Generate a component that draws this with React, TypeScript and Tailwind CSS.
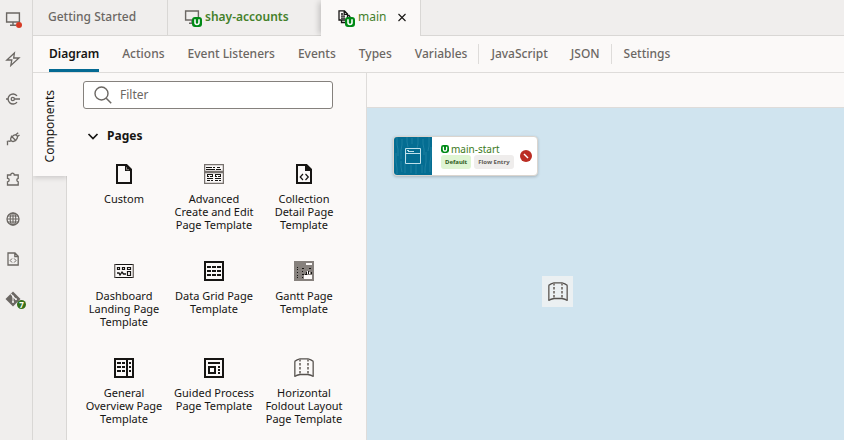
import React from "react";

type IconProps = { className?: string };

const Svg = ({ size = 20, children, className = "" }: { size?: number; children: React.ReactNode; className?: string }) => (
  <svg width={size} height={size} viewBox={`0 0 ${size} ${size}`} fill="none" stroke="currentColor" className={`shrink-0 ${className}`} aria-hidden="true">
    {children}
  </svg>
);

const ModifiedMark = ({ size = 10 }: { size?: number }) => (
  <svg width={size} height={size} viewBox="0 0 10 10" fill="none" aria-hidden="true">
    <rect width="10" height="10" rx="3" fill="#008a16" />
    <path d="M3 2.2v3.3a2 2 0 0 0 4 0V2.2" stroke="#fff" strokeWidth="1.6" />
  </svg>
);

const Monitor = () => (
  <Svg size={16}>
    <path d="M1.6 2h12.8v9H1.6zM8 11v3M5 14.2h6" strokeWidth="1.4" />
  </Svg>
);
const Bolt = () => (
  <Svg size={16}>
    <path d="M9.4 2 1.800 9h5L5.800 14.500l8.200-7.500H8.700z" strokeWidth="1.3" />
  </Svg>
);
const Endpoint = () => (
  <Svg size={16}>
    <path d="M12 4.900A5 5 0 1 0 12 11.100" strokeWidth="1.4" />
    <circle cx="7.800" cy="8" r="1.600" strokeWidth="1.300" />
    <path d="M9.300 8H15M1 8h2" strokeWidth="1.300" />
  </Svg>
);
const Plug = () => (
  <Svg size={16}>
    <path d="M6 4.800 11.200 10M7 5.500C5 7.500 5.500 9 6.300 9.700S9 10.800 10.500 9.300M7.500 5.300C9 3.500 10.800 3.500 11.800 4.400s1 2.800-.8 4.400M10.800 3.800l2.400-2M12.200 5.700l2.300-1.800M6 9.700C4.500 11 3.800 9.500 1.800 10.500M2.500 10.300v4" strokeWidth="1.300" />
  </Svg>
);
const Puzzle = () => (
  <Svg size={16}>
    <path d="M2.500 4h3.200a1.800 1.800 0 1 1 3.600 0h3.900v3.300a1.800 1.800 0 0 0 0 3.500V14H2.500v-3.200a1.700 1.700 0 0 0 0-3.400z" strokeWidth="1.300" />
  </Svg>
);
const Globe = () => (
  <Svg size={16}>
    <circle cx="8" cy="8" r="6" strokeWidth="1.300" />
    <ellipse cx="8" cy="8" rx="2.800" ry="6" strokeWidth="1.100" />
    <path d="M2 8h12M2.800 5h10.400M2.800 11h10.400M8 2v12" strokeWidth="1.100" />
  </Svg>
);
const CodeFile = () => (
  <Svg size={16}>
    <path d="M3 2h7l3.200 3.200V14H3zM9.800 2v3.500h3.400" strokeWidth="1.300" />
    <path d="M7 7.500 5.200 9.500 7 11.500M9.200 7.500 11 9.500 9.200 11.500" strokeWidth="1" />
  </Svg>
);
const Git = () => (
  <Svg size={16}>
    <path d="M8 .5 15.500 8 8 15.500.500 8z" fill="currentColor" stroke="none" />
    <path d="M5.800 3 8 5.200V11M8 5.500l3 3" stroke="#f0eeed" strokeWidth="1.100" />
    <circle cx="8" cy="11" r="1.100" fill="#f0eeed" stroke="none" />
    <circle cx="8" cy="5.500" r="1" fill="#f0eeed" stroke="none" />
    <circle cx="11" cy="8.300" r="1" fill="#f0eeed" stroke="none" />
  </Svg>
);

const PageStack = () => (
  <Svg size={16}>
    <path d="M2 1.800h5.500L10.500 5v6H2zM7.200 2v3.300h3.300M4 5h2M4 7.200h4M4 9.200h4M4.500 11v2.500h5M10.500 6.500h1.500L13 8v3" strokeWidth="1.300" />
  </Svg>
);

const PageBlank = () => (
  <Svg>
    <path d="M3 1h9.500L17 5.500V19H3z" strokeWidth="2" />
    <path d="M11 0l7 7h-7z" fill="currentColor" stroke="none" />
    <path d="M12.500 3.200v2.500H15" stroke="#8b8580" strokeWidth="1" />
  </Svg>
);
const PageCode = () => (
  <Svg>
    <path d="M3 1h9.500L17 5.500V19H3z" strokeWidth="2" />
    <path d="M11 0l7 7h-7z" fill="currentColor" stroke="none" />
    <path d="M9 10 6.200 13 9 16M11.500 10l2.800 3-2.800 3" strokeWidth="1.200" />
  </Svg>
);
const AdvancedForm = () => (
  <Svg>
    <path d="M.6.600h18.800v18.800H.6zM0 7.500h20M0 8.500h20" stroke="#77726e" strokeWidth="1.300" />
    <path d="M2 3.500h6m1 0h2m2 0h3M2 5.500h9m1 0h5" />
    <path d="M3 10.500h6m2 0h6M3 12.500h2m1 0h3m2 0h2m1 0h3M3 14.500h6m2 0h6M3 16.500h3m1 0h2m2 0h3m1 0h2M3.500 10v3M8.500 10v3M11.500 10v3M16.500 10v3" />
  </Svg>
);
const Dashboard = () => (
  <Svg>
    <path d="M0 3.500h20M0 16.500h20" strokeWidth="1.200" />
    <path d="M.7 3v14M19.300 3v14" stroke="#77726e" strokeWidth="1.400" />
    <path d="M3.500 6.500h2v2h-2zM8.500 6.500h2v2h-2zM13.500 6.500h3v2h-3zM13.500 10.500h3v4h-3z" strokeWidth="1.200" />
    <path d="M3 12h2l1 2 2-3 1.500 2H12" strokeWidth="1.300" />
  </Svg>
);
const DataGrid = () => (
  <Svg>
    <path d="M1 1h18v18H1z" strokeWidth="2" />
    <path d="M3 6h4m1 0h4m1 0h4M3 10h4m1 0h4m1 0h4M3 14h4m1 0h4m1 0h4" strokeWidth="2" />
  </Svg>
);
const Gantt = () => (
  <Svg>
    <path d="M0 0h20v20H0z" fill="#86817d" stroke="none" />
    <path d="M12 3h6M10 15h8M10 17h8" stroke="#fbf9f8" strokeWidth="2" />
    <path d="M3 6.500h1M3 8.500h1M3 11.500h1M3 14.500h1M3 16.500h1M8 7.500h2M8 10.500h1M8 13.500h2M8 16.500h1M15 7.500h2M11 13.500h2" strokeWidth="1" />
    <path d="M12.500 11v2M14.500 10v3M17.500 11v2" />
    <path d="M13.500 10v3M15.500 11v2" stroke="#fbf9f8" />
  </Svg>
);
const Overview = () => (
  <Svg>
    <path d="M1 1h18v18H1zM13 1v18" strokeWidth="2" />
    <path d="M3 5h4m1 0h3M3 9h4m1 0h3M3 13h4m1 0h3M15 5h2M15 9h2M15 13h2" strokeWidth="2" />
  </Svg>
);
const Guided = () => (
  <Svg>
    <path d="M1 1h18v18H1zM4 5h12M5 9h6v6H5z" strokeWidth="2" />
    <path d="M14 9h2M14 12h2M14 15h2" strokeWidth="2" />
  </Svg>
);
const Foldout = () => (
  <Svg>
    <path d="M.8 3.500v15M19.200 3.500v15" stroke="#77736f" strokeWidth="1.600" />
    <path d="M.5 3.500Q3 1.500 6 .8h8q3 .7 5.500 2.700M.5 18.500Q3 17 6 16.500h8q3 .5 5.500 2" stroke="#55514e" strokeWidth="1.300" />
    <path d="M6 1v15.500M14 1v15.500" stroke="#86817d" strokeWidth="2" strokeDasharray="2.500 1.500" />
  </Svg>
);

const WindowIcon = ({ className = "" }: IconProps) => (
  <svg width="16" height="16" viewBox="0 0 16 16" fill="none" stroke="#bfe0ea" className={className} aria-hidden="true">
    <path d="M.5.500h15v15H.5zM0 5.500h16" />
    <path d="M2 2.500h2M3 3.500h6" />
  </svg>
);

const rail: { label: string; icon: React.ReactNode; badge?: React.ReactNode }[] = [
  { label: "Applications", icon: <Monitor />, badge: <span className="absolute -right-px bottom-[3px] size-[6px] rounded-full bg-[#d63b25]" /> },
  { label: "Services", icon: <Bolt /> },
  { label: "Endpoints", icon: <Endpoint /> },
  { label: "Processes", icon: <Plug /> },
  { label: "Extensions", icon: <Puzzle /> },
  { label: "Languages", icon: <Globe /> },
  { label: "Source", icon: <CodeFile /> },
  {
    label: "Git",
    icon: <Git />,
    badge: <span className="absolute -right-[5px] bottom-[2px] flex size-[9px] items-center justify-center rounded-full bg-[#35701c] text-[8px] leading-none font-bold text-white">7</span>,
  },
];

const templates: { name: string; icon: React.ReactNode }[] = [
  { name: "Custom", icon: <PageBlank /> },
  { name: "Advanced Create and Edit Page Template", icon: <AdvancedForm /> },
  { name: "Collection Detail Page Template", icon: <PageCode /> },
  { name: "Dashboard Landing Page Template", icon: <Dashboard /> },
  { name: "Data Grid Page Template", icon: <DataGrid /> },
  { name: "Gantt Page Template", icon: <Gantt /> },
  { name: "General Overview Page Template", icon: <Overview /> },
  { name: "Guided Process Page Template", icon: <Guided /> },
  { name: "Horizontal Foldout Layout Page Template", icon: <Foldout /> },
];

const viewGroups = [
  ["Diagram", "Actions", "Event Listeners", "Events", "Types", "Variables"],
  ["JavaScript", "JSON"],
  ["Settings"],
];

export default function App() {
  return (
    <div className="flex h-screen w-full overflow-hidden bg-[#fbf9f8] font-['Noto_Sans',sans-serif] text-[#161513]">
      <nav className="flex w-[33px] shrink-0 flex-col items-center gap-4 border-r border-[#d9d7d5] bg-[#f0eeed] pt-[7px] pr-[6px] text-[#6b6763]" aria-label="Navigator">
        {rail.map((r) => (
          <button key={r.label} aria-label={r.label} className="relative flex h-6 w-4 shrink-0 items-center justify-center">
            {r.icon}
            {r.badge}
          </button>
        ))}
      </nav>

      <div className="flex min-w-0 flex-1 flex-col">
        <div className="flex h-9 shrink-0 bg-[#f0eeed] text-xs font-medium text-[#6b6763]">
          <button className="flex w-[135px] items-center border-r border-b border-[#d9d7d5] pb-0.5 pl-[15px]">Getting Started</button>
          <button className="flex w-[153px] items-center gap-1 border-b border-[#d9d7d5] pb-0.5 pl-4 font-semibold text-[#44802a]">
            <span className="relative flex w-[17px] text-[#6b6763]">
              <Monitor />
              <span className="absolute -right-px -bottom-0.5"><ModifiedMark /></span>
            </span>
            shay-accounts
          </button>
          <div className="flex w-[100px] items-center border-r border-[#d9d7d5] bg-[#fbf9f8] pb-0.5 pl-4 shadow-[-4px_0_6px_-2px_rgba(0,0,0,0.2)] [clip-path:inset(0_0_0_-8px)]">
            <button className="flex items-center gap-1 font-normal text-[#44802a]">
              <span className="relative flex w-[17px] text-[#161513]">
                <PageStack />
                <span className="absolute -right-px -bottom-0.5"><ModifiedMark /></span>
              </span>
              main
            </button>
            <button aria-label="Close main" className="ml-auto pr-3 text-[#161513]">
              <Svg size={12}><path d="m2.500 3 7 7M9.500 3l-7 7" strokeWidth="1.100" /></Svg>
            </button>
          </div>
          <div className="flex-1 border-b border-[#d9d7d5]" />
        </div>

        <nav className="flex h-[37px] shrink-0 items-center border-b border-[#dedcda] px-1 text-xs font-medium text-[#6b6763]" aria-label="Views">
          {viewGroups.map((group, i) => (
            <div key={group[0]} className={`flex items-center ${i > 0 ? "h-5 border-l border-[#dedcda]" : "h-full"}`}>
              {group.map((v) =>
                v === "Diagram" ? (
                  <button key={v} className="mr-[11px] ml-3 h-full border-b-[3px] border-[#046a93] pt-[3px] font-semibold text-[#161513]">{v}</button>
                ) : (
                  <button key={v} className={i === 2 ? "mx-3" : "mr-[11px] ml-3"}>{v}</button>
                )
              )}
            </div>
          ))}
        </nav>

        <div className="flex min-h-0 flex-1">
          <div className="flex w-[34px] shrink-0 flex-col">
            <button className="flex h-[103px] shrink-0 items-center justify-center bg-[#fbf9f8] pt-1 text-xs shadow-[0_2px_5px_rgba(0,0,0,0.15)] [clip-path:inset(0_0_-8px_0)]">
              <span className="rotate-180 [writing-mode:vertical-rl]">Components</span>
            </button>
            <div className="flex-1 border-r border-[#d9d7d5] bg-[#f0eeed]" />
          </div>

          <aside className="w-[300px] shrink-0 overflow-hidden border-r border-[#dedcda] pt-2">
            <label className="mx-4 flex h-7 w-[250px] items-center gap-2 rounded-[3px] border border-[#85817d] bg-white pl-[10px] text-[#6b6763]">
              <Svg size={18}><circle cx="7.500" cy="7.500" r="6.500" strokeWidth="1.400" /><path d="m12.200 12.200 5 5" strokeWidth="1.500" /></Svg>
              <input aria-label="Filter" placeholder="Filter" className="min-w-0 flex-1 bg-transparent text-xs outline-none placeholder:text-[#6b6763]" />
            </label>
            <button className="mt-[19px] ml-5 flex h-4 items-center gap-2 text-xs font-bold">
              <Svg size={12}><path d="m1.500 4 4.500 4.500L10.500 4" strokeWidth="1.700" /></Svg>
              Pages
            </button>
            <div className="mt-5 ml-3 grid w-[270px] auto-rows-[97px] grid-cols-3">
              {templates.map((t) => (
                <button key={t.name} className="flex flex-col items-center gap-2 px-1 text-center text-[11px] leading-[13px]">
                  {t.icon}
                  <span>{t.name}</span>
                </button>
              ))}
            </div>
          </aside>

          <main className="flex min-w-0 flex-1 flex-col">
            <div className="h-[35px] shrink-0 border-b border-[#dedcda]" />
            <div className="relative flex-1 bg-[#d0e4ef]">
              <div className="absolute top-7 left-[26px] flex h-10 w-[145px] overflow-hidden rounded-[4px] border border-[#dad5cf] bg-white shadow-[0_1px_3px_rgba(0,0,0,0.2)]">
                <div className="relative flex w-[38px] shrink-0 items-center justify-center bg-[#046d92]">
                  <svg className="absolute inset-0" width="38" height="38" viewBox="0 0 38 38" fill="none" stroke="#2d8aaa" aria-hidden="true">
                    <path d="M3 0v8l1 4v7M8 2v6l-1 5v9M13 0v5l1 5M18 1v6M24 0v7l-1 4M29 2v5l1 5v6M35 0v9l-1 5M2 16v9l1 6v6M7 24v6l1 5M12 12v9l-1 5v10M17 28v8M22 27v10M28 28v8M32 15v10l-1 6v5M37 10v9l-1 6v10" opacity=".65" />
                  </svg>
                  <WindowIcon className="relative" />
                </div>
                <div className="flex flex-1 items-center pr-[5px] pl-[9px]">
                  <div className="flex-1">
                    <div className="flex h-3 items-center gap-[2px] text-[10px] leading-3 text-[#3d7a22]">
                      <ModifiedMark size={8} />
                      main-start
                    </div>
                    <div className="flex gap-[3px] text-[6px] leading-[14px] font-bold whitespace-nowrap">
                      <span className="rounded-[3px] bg-[#dff5d3] px-1 text-[#2f5a1b]">Default</span>
                      <span className="rounded-[3px] bg-[#efedec] px-1 text-[#5f5b57]">Flow Entry</span>
                    </div>
                  </div>
                  <span className="flex size-3 items-center justify-center rounded-full bg-[#bb2d23]">
                    <Svg size={12} className="text-white"><path d="m4 4 4 4" strokeWidth="1.500" /></Svg>
                  </span>
                </div>
              </div>
              <div className="absolute top-[168px] left-[175px] flex size-[31px] items-center justify-center bg-[#ebf0f2]">
                <Foldout />
              </div>
            </div>
          </main>
        </div>
      </div>
    </div>
  );
}
